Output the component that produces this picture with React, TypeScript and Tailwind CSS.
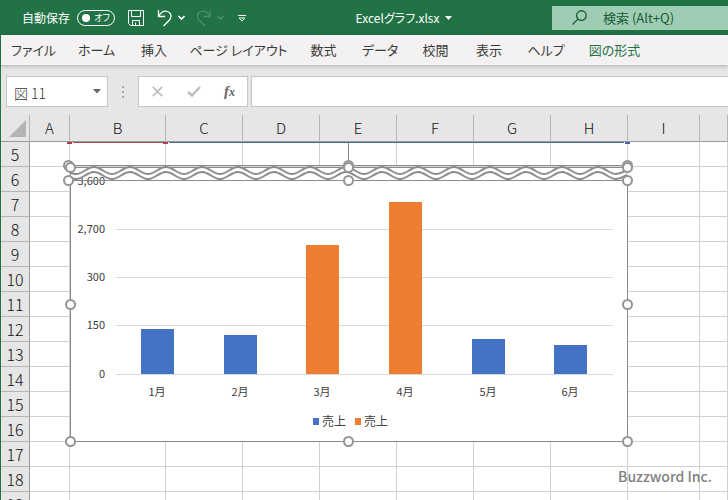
const tabs = ['ファイル', 'ホーム', '挿入', 'ページ レイアウト', '数式', 'データ', '校閲', '表示', 'ヘルプ', '図の形式']
const columns = ['A', 'B', 'C', 'D', 'E', 'F', 'G', 'H', 'I', '']
const rows = [5, 6, 7, 8, 9, 10, 11, 12, 13, 14, 15, 16, 17, 18, 19]

const bars = [
  { label: '1月', x: 73, value: 45, color: '#4472c4' },
  { label: '2月', x: 156, value: 39, color: '#4472c4' },
  { label: '3月', x: 238, value: 129, color: '#ed7d31' },
  { label: '4月', x: 321, value: 172, color: '#ed7d31' },
  { label: '5月', x: 404, value: 35, color: '#4472c4' },
  { label: '6月', x: 486, value: 29, color: '#4472c4' },
]

const axis = [
  { label: '3,600', y: 39 },
  { label: '2,700', y: 87 },
  { label: '300', y: 135 },
  { label: '150', y: 183 },
  { label: '0', y: 232 },
]

const handles = [
  [0, 23], [280, 23], [559, 23],
  [2, 25], [280, 25], [559, 25],
  [0, 38], [280, 38], [559, 38],
  [2, 162], [559, 162],
  [2, 299], [280, 299], [559, 299],
]

// One wave line across the top of the chart, 36px per period
function wave(y: number) {
  let d = `M3 ${y + 6} Q5 ${y + 7} 8 ${y + 7}`
  for (let x = 8; x < 530; x += 36) {
    d += ` C${x + 7} ${y + 7} ${x + 11} ${y} ${x + 18} ${y}`
    d += ` C${x + 25} ${y} ${x + 29} ${y + 7} ${x + 36} ${y + 7}`
  }
  return `${d} C554 ${y + 7} 556 ${y + 4} 559 ${y + 3}`
}

function TitleBar() {
  return (
    <header className="flex h-[35px] items-center bg-[#217346] text-white">
      <div className="flex w-64 shrink-0 items-center pl-[22px]">
        <span id="autosave" className="w-[55px] text-xs whitespace-nowrap">自動保存</span>
        <button
          role="switch"
          aria-checked="false"
          aria-labelledby="autosave"
          className="flex h-4 w-[38px] items-center justify-between rounded-full border border-white pr-1 pl-1"
        >
          <span className="size-2 rounded-full bg-white" />
          <span className="text-[9px] leading-none">オフ</span>
        </button>
        <button aria-label="上書き保存" className="ml-[13px]">
          <svg width="16" height="16" viewBox="0 0 16 16" fill="none" stroke="white">
            <path d="M.5.5h15v15H2.500L.5 13.500zM3.500.5v6h9v-6M4.500 15.500v-5h7v5M7.500 15.500v-3" />
          </svg>
        </button>
        <button aria-label="元に戻す" className="ml-[13px]">
          <svg width="29" height="18" viewBox="0 0 29 18" fill="none" stroke="white" strokeWidth="1.3">
            <path d="M1.500 1v6.500H8M1.500 7.500C4 3 7.500 1.500 10.500 2.500c4 1.300 4.500 6 1.500 9L6.500 17" />
            <path d="M21.500 7l3 3 3-3" strokeWidth="1.600" />
          </svg>
        </button>
        <button aria-label="やり直し" className="ml-2.5" disabled>
          <svg width="29" height="18" viewBox="0 0 29 18" fill="none" stroke="#4d8f6b" strokeWidth="1.300">
            <path d="M14 1v6.500H7.500M14 7.500C11.500 3 8 1.500 5 2.500c-4 1.300-4.500 6-1.500 9L9 17" />
            <path d="M21.500 7l3 3 3-3" strokeWidth="1.500" />
          </svg>
        </button>
        <button aria-label="クイック アクセス ツール バーのユーザー設定" className="ml-[13px]">
          <svg width="8" height="8" viewBox="0 0 8 8" fill="none" stroke="white">
            <path d="M0 1.500h8M1 4l3 3 3-3z" />
          </svg>
        </button>
      </div>
      <button className="flex flex-1 items-center justify-center gap-1.5 text-xs whitespace-nowrap">
        Excelグラフ.xlsx
        <svg width="7" height="4" viewBox="0 0 7 4" fill="white">
          <path d="M0 0h7L3.500 4z" />
        </svg>
      </button>
      <label className="flex h-6 w-44 shrink-0 items-center gap-4 bg-[#9fcdb3] pl-5 text-[#185c37]">
        <svg width="15" height="15" viewBox="0 0 14 14" fill="none" stroke="currentColor" strokeWidth="1.200" className="shrink-0">
          <circle cx="8.800" cy="5.200" r="4.500" />
          <path d="M5.500 8.500L.5 13.500" />
        </svg>
        <input
          aria-label="検索"
          placeholder="検索 (Alt+Q)"
          className="w-full min-w-0 bg-transparent text-[13px] outline-none placeholder:text-[#185c37]"
        />
      </label>
    </header>
  )
}

function Ribbon() {
  return (
    <nav className="relative grid h-[30px] grid-cols-[65px_61px_54px_115px_55px_58px_53px_54px_60px_77px] items-center border-l border-[#217346] bg-[#f3f1f1] text-[#3b3a39] shadow-[0_1px_4px_rgba(0,0,0,0.25)]">
      {tabs.map((tab) => (
        <button
          key={tab}
          className={tab === '図の形式' ? 'text-[13px] whitespace-nowrap text-[#217346]' : 'text-[13px] whitespace-nowrap'}
        >
          {tab}
        </button>
      ))}
    </nav>
  )
}

function FormulaBar() {
  return (
    <div className="flex h-[50px] items-end border-l border-[#217346] pb-2 pl-[5px]">
      <div className="flex h-[31px] w-[102px] items-center border border-[#c6c6c6] bg-white">
        <input
          aria-label="名前ボックス"
          defaultValue="図 11"
          className="min-w-0 flex-1 bg-transparent pt-0.5 pl-[7px] text-sm font-light text-[#333] outline-none"
        />
        <button aria-label="名前の一覧" className="px-1.5">
          <svg width="8" height="5" viewBox="0 0 8 5" fill="#666">
            <path d="M0 0h8L4 4.500z" />
          </svg>
        </button>
      </div>
      <div className="flex h-[31px] w-[30px] flex-col items-center justify-center gap-[3px]">
        <span className="size-0.5 bg-[#aaa]" />
        <span className="size-0.5 bg-[#aaa]" />
        <span className="size-0.5 bg-[#aaa]" />
      </div>
      <div className="flex h-[31px] w-[110px] items-center justify-between border border-[#c6c6c6] bg-white pr-3 pl-[13px]">
        <button aria-label="キャンセル">
          <svg width="11" height="11" viewBox="0 0 11 11" stroke="#bdbdbd" strokeWidth="1.700">
            <path d="M.8.8l9.400 9.400M10.200.8L.8 10.200" />
          </svg>
        </button>
        <button aria-label="入力">
          <svg width="14" height="11" viewBox="0 0 14 11" fill="none" stroke="#bdbdbd" strokeWidth="2.400">
            <path d="M1 6l4 3.500L13 1" />
          </svg>
        </button>
        <button
          aria-label="関数の挿入"
          className="font-['Liberation_Serif',serif] text-[15px] leading-none font-bold text-[#666] italic"
        >
          f<span className="text-xs">x</span>
        </button>
      </div>
      <input
        aria-label="数式バー"
        className="ml-[3px] h-[31px] min-w-0 flex-1 border border-r-0 border-[#c6c6c6] bg-white px-2 text-sm outline-none"
      />
    </div>
  )
}

function Chart() {
  return (
    <svg
      width="570"
      height="310"
      viewBox="-5 0 570 310"
      className="absolute top-[27px] left-[62px]"
      role="img"
      aria-label="売上グラフ"
    >
      {/* Source range markers */}
      <path d="M5 .5h91" stroke="#a94a50" />
      <path d="M101 .5h455" stroke="#446a9c" />
      <path d="M-1 0h5v2h-5zM95 0h5v2h-5z" fill="#b04045" />
      <path d="M557 0h5v2h-5z" fill="#4065ae" />

      <path d="M280.500 1v23" stroke="#8a8a8a" />
      <rect x="2.500" y="23.500" width="557" height="276" fill="white" stroke="#8a8a8a" />

      <g stroke="#d9d9d9">
        {axis.slice(1).map((tick) => (
          <path key={tick.label} d={`M48 ${tick.y + 0.5}h497`} />
        ))}
      </g>
      <g className="text-[11px]" fill="#404040" textAnchor="end">
        {axis.map((tick) => (
          <text key={tick.label} x="37" y={tick.y + 4}>{tick.label}</text>
        ))}
      </g>
      {bars.map((bar) => (
        <g key={bar.label}>
          <rect x={bar.x} y={232 - bar.value} width="33" height={bar.value} fill={bar.color} />
          <text x={bar.x + 16} y="254" className="text-[11px]" fill="#404040" textAnchor="middle">
            {bar.label}
          </text>
        </g>
      ))}

      <g className="text-xs" fill="#404040">
        <rect x="245" y="276" width="6" height="7" fill="#4472c4" />
        <text x="254" y="284">売上</text>
        <rect x="287" y="276" width="6" height="7" fill="#ed7d31" />
        <text x="296" y="284">売上</text>
      </g>

      {/* Axis break */}
      <path d={wave(27)} fill="none" stroke="white" strokeWidth="7" />
      <path d="M2 24.500h557" stroke="#d9d9d9" />
      <path d="M2 23.500h557M2 25.500h557M0 38.500h559" stroke="#8a8a8a" />
      <path d={wave(25)} fill="none" stroke="#8a8a8a" strokeWidth="2" />
      <path d={wave(30)} fill="none" stroke="#8a8a8a" strokeWidth="2" />

      <g fill="white" stroke="#949494" strokeWidth="2">
        {handles.map(([x, y]) => (
          <circle key={`${x}-${y}`} cx={x + 0.5} cy={y + 0.5} r="4.500" />
        ))}
      </g>
    </svg>
  )
}

function Sheet() {
  return (
    <main className="relative border-l border-[#217346]">
      <table className="w-full table-fixed border-separate border-spacing-0 bg-white text-base leading-6 text-[#111]">
        <colgroup>
          <col className="w-[29px]" />
          <col className="w-10" />
          <col className="w-24" />
          <col className="w-[77px]" />
          <col className="w-[77px]" />
          <col className="w-[77px]" />
          <col className="w-[77px]" />
          <col className="w-[77px]" />
          <col className="w-[77px]" />
          <col className="w-[72px]" />
          <col />
        </colgroup>
        <thead>
          <tr className="h-[27px] bg-[#e6e6e6]">
            <th className="border-r border-b border-[#9b9b9b] border-r-[#b5b5b5] p-0" aria-label="すべて選択">
              <svg width="17" height="17" viewBox="0 0 17 17" fill="#b4b4b4" className="ml-2">
                <path d="M17 0v17H0z" />
              </svg>
            </th>
            {columns.map((column) => (
              <th key={column} className="border-r border-b border-[#9b9b9b] border-r-[#b5b5b5] p-0 text-[15px] font-light">
                {column}
              </th>
            ))}
          </tr>
        </thead>
        <tbody>
          {rows.map((row) => (
            <tr key={row} className="h-[25px]">
              <th className="border-r border-b border-[#b5b5b5] border-r-[#9b9b9b] bg-[#e6e6e6] p-0 font-light">{row}</th>
              {columns.map((column) => (
                <td key={column} className="border-r border-b border-[#d0d0d0] p-0" />
              ))}
            </tr>
          ))}
        </tbody>
      </table>
      <Chart />
    </main>
  )
}

export default function App() {
  return (
    <div className="relative h-screen overflow-hidden bg-[#e6e6e6] font-['Noto_Sans_CJK_JP',sans-serif] [font-feature-settings:'palt']">
      <TitleBar />
      <Ribbon />
      <FormulaBar />
      <Sheet />
      <p className="absolute right-4 bottom-3 text-sm leading-6 font-medium text-[#808080]">Buzzword Inc.</p>
    </div>
  )
}
